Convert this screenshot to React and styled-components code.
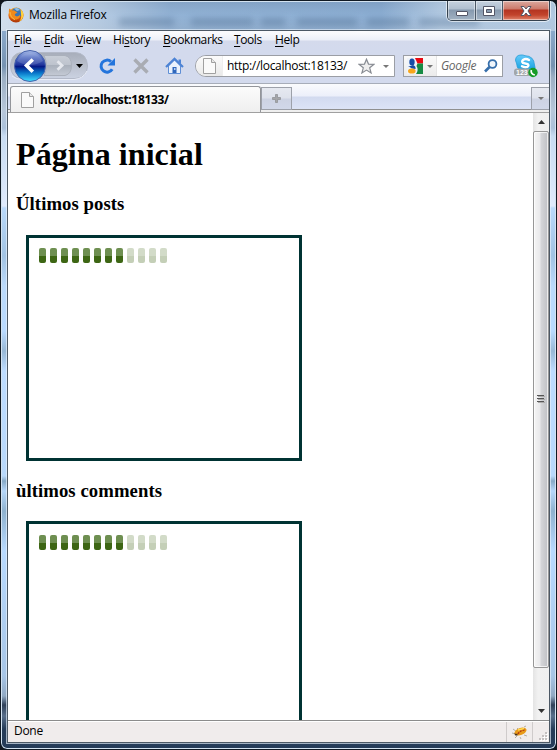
import React from 'react';
import styled, { createGlobalStyle, css } from 'styled-components';

const Global = createGlobalStyle`
  html, body { margin: 0; padding: 0; background: #11161d; overflow: hidden; }
  * { box-sizing: border-box; }
  svg { display: block; flex: none; }
`;

const ui = css`
  font-family: 'Open Sans', 'Noto Sans', sans-serif;
  font-size: 12px;
  line-height: 16px;
  white-space: nowrap;
  color: #000;
`;

const Window = styled.div`
  ${ui}
  width: 557px;
  height: 750px;
  padding: 2px 6px 6px;
  border: 1px solid #101923;
  border-radius: 7px;
  display: flex;
  flex-direction: column;
  overflow: hidden;
  box-shadow: inset 0 0 0 1px #d3e2f0;
  background:
    linear-gradient(90deg, rgba(255,255,255,.6), rgba(255,255,255,.35) 100px, rgba(255,255,255,.05) 170px, transparent 380px, rgba(215,228,240,.5) 440px) 0 0 / 100% 30px no-repeat,
    linear-gradient(180deg, #7f9fc3 0, #8caed3 14px, #8dabcc 28px, #7692b1 65px, #9cafc4 76px, #b7c7da 110px,
      #abc1da 127px, #c8dcf2 135px, #dfeafc 205px, #b9d9fb 207px, #a2c3e3 255px, #bbdafb 285px, #b9daff 330px,
      #98b8d6 350px, #bddcff 370px, #b8d8fb 475px, #88aac7 480px, #b6d7fa 490px, #8fb2cf 510px, #b8daff 550px,
      #a7c5e6 675px, #91a9c3 695px, #304159 704px, #596f8b 715px, #253b58 728px, #263c59 750px);
`;

const TitleBar = styled.div`
  height: 27px;
  flex: none;
  display: flex;
  align-items: flex-start;
  justify-content: space-between;
  position: relative;
`;

const TitleLeft = styled.div`
  display: flex;
  align-items: center;
  gap: 5px;
  padding: 4px 0 0 1px;
`;

const Text = styled.span`
  letter-spacing: ${p => p.$ls || 0}px;
  font-weight: ${p => (p.$bold ? 700 : 400)};
`;

const Ghost = styled.div`
  position: absolute;
  left: ${p => p.$x}px;
  top: 15px;
  width: ${p => p.$w}px;
  height: 8px;
  background: #48678b;
  opacity: .35;
  filter: blur(3px);
`;

const Controls = styled.div`
  display: flex;
  width: 103px;
  height: 20px;
  margin: -2px 0 0;
  border: 1px solid #35424f;
  border-top: 0;
  border-radius: 0 0 5px 5px;
  box-shadow: 0 0 0 1px rgba(255,255,255,.6);
  overflow: hidden;
  position: relative;
`;

const Control = styled.div`
  width: ${p => p.$w}px;
  display: flex;
  align-items: center;
  justify-content: center;
  border-right: 1px solid #4c5967;
  box-shadow: inset 0 0 0 1px rgba(255,255,255,.45);
  background: ${p => p.$close
    ? 'linear-gradient(#dba99f 0, #cc7a6b 8px, #b43421 9px, #c2442c 14px, #e0846c 100%)'
    : 'linear-gradient(#c6d2df 0, #b0bfcf 8px, #8699ae 9px, #a2b3c4 100%)'};
  &:last-child { border: 0; flex: 1; }
`;

const Client = styled.div`
  flex: 1;
  min-height: 0;
  display: flex;
  flex-direction: column;
  border: 1px solid #4c5864;
  box-shadow: 0 0 0 1px rgba(230,241,252,.65);
  background: #fff;
`;

const MenuBar = styled.div`
  height: 18px;
  flex: none;
  display: flex;
  padding: 1px 0 0 6px;
  background: linear-gradient(#fdfdfe, #eceff8 9px, #d4daec 10px, #d3daed);
`;

const MenuItem = styled.div`
  width: ${p => p.$w}px;
  letter-spacing: ${p => p.$ls}px;
  u { text-decoration-thickness: 1px; text-underline-offset: 2px; }
`;

const Toolbar = styled.div`
  height: 35px;
  flex: none;
  display: flex;
  align-items: center;
  background: #d3daed;
  border-bottom: 1px solid #a7adb9;
`;

const NavSlot = styled.div` width: 82px; height: 34px; flex: none; `;
const IconSlot = styled.div`
  width: ${p => p.$w}px;
  flex: none;
  display: flex;
  justify-content: center;
`;

const AddressBar = styled.div`
  width: 200px;
  height: 22px;
  flex: none;
  margin-left: 4px;
  display: flex;
  align-items: center;
  border: 1px solid #9b9ea5;
  border-radius: 11px 0 0 11px;
  background: #fff;
  overflow: hidden;
`;
const SiteIcon = styled.div`
  width: 27px;
  height: 20px;
  display: flex;
  align-items: center;
  justify-content: center;
  padding-left: 1px;
  background: linear-gradient(#fbfbfb, #e9e9e9);
  border-right: 1px solid #eee;
`;
const Address = styled.div`
  flex: 1;
  padding-left: 4px;
  letter-spacing: ${p => p.$ls}px;
`;
const Arrow = styled.i`
  width: 0;
  height: 0;
  border: 3px solid transparent;
  border-top-color: ${p => p.$c || '#777'};
  border-bottom: 0;
  margin: ${p => p.$m || 0};
`;

const SearchBox = styled.div`
  width: 100px;
  height: 22px;
  flex: none;
  margin-left: 8px;
  display: flex;
  align-items: center;
  border: 1px solid #9b9ea5;
  background: #fff;
`;
const Engine = styled.div`
  width: 33px;
  height: 20px;
  padding-left: 3px;
  display: flex;
  align-items: center;
  background: linear-gradient(#fafafa, #ebebeb);
  border-right: 1px solid #e4e4e4;
`;
const Placeholder = styled.div`
  flex: 1;
  padding-left: 4px;
  font-style: italic;
  color: #666;
  letter-spacing: ${p => p.$ls}px;
`;

const TabStrip = styled.div`
  height: 28px;
  flex: none;
  display: flex;
  align-items: flex-start;
  background: linear-gradient(#fafbfd 0, #eceffa 12px, #d2daef 13px, #dce3f6 25px, #8f8f8f 25px, #8f8f8f 26px, #efefef 26px);
`;
const Tab = styled.div`
  width: 251px;
  height: 26px;
  margin: 2px 0 0 2px;
  padding-left: 10px;
  display: flex;
  align-items: center;
  gap: 6px;
  border: 1px solid #93959a;
  border-bottom: 0;
  border-radius: 3px 3px 0 0;
  background: linear-gradient(#fbfbfb, #efefef);
`;
const NewTab = styled.div`
  width: 31px;
  height: 23px;
  margin-top: 3px;
  display: flex;
  align-items: center;
  justify-content: center;
  border: 1px solid #9da1aa;
  background: linear-gradient(#e6e9f1 0, #dee2ec 10px, #cdd3e3 11px, #d1d8e9);
`;
const AllTabs = styled(NewTab)`
  width: 18px;
  margin-left: auto;
  border-right: 0;
`;

const Body = styled.div`
  flex: 1;
  min-height: 0;
  display: flex;
  border-top: 1px solid #a0a0a0;
  border-bottom: 1px solid #8c8c8c;
`;
const Page = styled.main`
  flex: 1;
  padding: 0 8px;
  overflow: hidden;
  background: #fff;
  font-family: 'Liberation Serif', 'Times New Roman', serif;
  white-space: normal;
`;
const H1 = styled.h1`
  margin: 22px 0 0;
  font-size: 32px;
  line-height: 38px;
  letter-spacing: .08px;
`;
const H3 = styled.h3`
  margin: ${p => p.$mt}px 0 0;
  font-size: 18.72px;
  line-height: 22px;
  letter-spacing: .07px;
`;
const Panel = styled.section`
  width: 276px;
  height: 226px;
  margin: ${p => p.$mt}px 0 0 10px;
  padding: ${p => p.$pt}px 0 0 10px;
  border: 3px solid #003333;
`;
const Loader = styled.div` display: flex; gap: 4px; `;
const Pill = styled.i`
  width: 7px;
  height: 15px;
  border-radius: 2px;
  background: ${p => p.$on
    ? 'linear-gradient(#6e8f51 8px, #3d6614 8px)'
    : 'linear-gradient(#d2dbc8 8px, #c4cfb7 8px)'};
`;

const Scrollbar = styled.div`
  width: 16px;
  display: flex;
  flex-direction: column;
  background: linear-gradient(90deg, #e4e4e4, #f1f1f1 5px, #f0f0f0);
`;
const ScrollButton = styled.div`
  height: 18px;
  flex: none;
  margin-top: ${p => (p.$last ? 'auto' : 0)};
  display: flex;
  align-items: center;
  justify-content: center;
`;
const Thumb = styled.div`
  height: 537px;
  flex: none;
  display: flex;
  align-items: center;
  justify-content: center;
  border: 1px solid #979797;
  border-radius: 2px;
  box-shadow: inset 0 0 0 1px rgba(255,255,255,.7);
  background: linear-gradient(90deg, #f5f5f5, #e9e9eb 6px, #d5d6d9 7px, #bfc0c4);
`;
const Status = styled.div`
  height: 21px;
  flex: none;
  display: flex;
  align-items: center;
  border-top: 1px solid #fff;
  background: #f0ecec;
`;
const StatusText = styled.div`
  flex: 1;
  padding: 0 0 2px 6px;
  letter-spacing: ${p => p.$ls}px;
`;
const StatusCell = styled.div`
  width: ${p => p.$w}px;
  height: 20px;
  display: flex;
  align-items: ${p => (p.$end ? 'flex-end' : 'center')};
  justify-content: ${p => (p.$end ? 'flex-end' : 'center')};
  border-left: 1px solid #cfcbcb;
`;

const FirefoxIcon = () => (
  <svg width="16" height="16" viewBox="0 0 16 16">
    <defs>
      <linearGradient id="fox" x2="0" y2="1"><stop stopColor="#f6a623" /><stop offset=".5" stopColor="#ea6b12" /><stop offset="1" stopColor="#a93408" /></linearGradient>
    </defs>
    <circle cx="8" cy="8" r="7.6" fill="url(#fox)" />
    <circle cx="8.5" cy="6" r="5.2" fill="#3c76b5" />
    <path d="M6 1.5Q10 0 12 3L9 4Z" fill="#8fc0e4" />
    <path d="M1.2 1.5L4 3.5Q6 3 7.4 4.2L9.5 5.5 7 7Q6 9 9 9.4 11.5 9.4 12 7.6 12.7 11.5 8.6 12.5 3 13 1 8Q.5 4 1.2 1.5Z" fill="#f08a1c" />
    <path d="M12.5 2.3Q15.8 5 15.3 9 14.5 13 11 14.8 14 11 13 7Z" fill="#ffd33b" />
    <path d="M2 5Q2.4 10.6 7 12.8" fill="none" stroke="#ffc751" strokeWidth=".8" />
  </svg>
);

const NavButtons = () => (
  <svg width="81" height="34" viewBox="0 0 81 34">
    <defs>
      <linearGradient id="back" x2="0" y2="1"><stop stopColor="#a9bce8" /><stop offset=".22" stopColor="#5570c4" /><stop offset=".48" stopColor="#1b2f99" /><stop offset=".5" stopColor="#041280" /><stop offset=".72" stopColor="#0873c8" /><stop offset="1" stopColor="#45e2ff" /></linearGradient>
      <linearGradient id="cap" x2="0" y2="1"><stop stopColor="#a7adba" /><stop offset=".5" stopColor="#bac0cd" /><stop offset="1" stopColor="#cbd2e2" /></linearGradient>
      <linearGradient id="fwd" x2="0" y2="1"><stop stopColor="#c9ced7" /><stop offset=".48" stopColor="#bdc3cd" /><stop offset=".5" stopColor="#aab1bc" /><stop offset="1" stopColor="#c4cad5" /></linearGradient>
    </defs>
    <path d="M14 3.5H67Q79 4 79.500 17 79 29 67 29.500H14Q3 29 2.500 17 3 4 14 3.500Z" fill="url(#cap)" stroke="#b3b9c8" />
    <path d="M4 27Q8 30.500 15 30.500H66Q75 30 79 22" fill="none" stroke="#e9edf7" />
    <path d="M36 6.500H57Q63.500 8 63.500 16.500 63.500 25 57 26.500H36Q41 17 36 6.500Z" fill="url(#fwd)" stroke="#aab0bb" />
    <path d="M49.500 12.300L54 16.500 49.500 20.800" fill="none" stroke="#e5e8ee" strokeWidth="2.800" />
    <circle cx="22" cy="17" r="15.500" fill="url(#back)" stroke="#4762aa" />
    <path d="M9 12Q13 4 22 4T35 12Q29 16 22 16T9 12Z" fill="#fff" opacity=".14" />
    <path d="M24.800 10.500L18.500 16.500 24.800 22.800" fill="none" stroke="#fff" strokeWidth="3.600" />
    <path d="M68 15H75L71.500 19Z" fill="#000" />
  </svg>
);

const Reload = () => (
  <svg width="18" height="18" viewBox="0 0 18 18">
    <path d="M14.200 12.200A6 6 0 1 1 13 4.600" fill="none" stroke="#2475dc" strokeWidth="3" />
    <path d="M17 1V8.500H9.500Z" fill="#2475dc" />
  </svg>
);
const Stop = () => (
  <svg width="18" height="18" viewBox="0 0 18 18"><path d="M2.500 2.500L15.500 15.500M15.500 2.500L2.500 15.500" stroke="#a9acb3" strokeWidth="3.400" /></svg>
);
const Home = () => (
  <svg width="19" height="18" viewBox="0 0 19 18">
    <path d="M3.500 9V16.500H15.500V9L9.500 3Z" fill="#eaf2fd" stroke="#5f8ed5" />
    <path d="M1 10L9.500 1.800 18 10" fill="none" stroke="#4c83d5" strokeWidth="2.200" />
    <path d="M13.500 2.500H16V7L13.500 5Z" fill="#4c83d5" />
    <path d="M7.500 10H11.500V16H7.500Z" fill="#2f67bd" /><path d="M9 11H10.500V13H9Z" fill="#b8d2f5" />
  </svg>
);
const Doc = () => (
  <svg width="13" height="16" viewBox="0 0 13 16">
    <path d="M.5.5H8.500L12.500 4.500V15.500H.5Z" fill="#fafafa" stroke="#a0a0a0" />
    <path d="M8.500.5V4.500H12.500" fill="#e8e8e8" stroke="#a0a0a0" />
  </svg>
);
const Star = () => (
  <svg width="17" height="17" viewBox="0 0 17 17">
    <path d="M8.500 1.200L10.500 6.100 15.800 6.400 11.700 9.800 13.100 15 8.500 12.100 3.900 15 5.300 9.800 1.200 6.400 6.500 6.100Z" fill="#eee" stroke="#888c93" strokeWidth="1.200" />
  </svg>
);
const GoogleIcon = () => (
  <svg width="16" height="16" viewBox="0 0 16 16">
    <path d="M0 0H16V16H0Z" fill="#eef3fa" />
    <path d="M8 0H16V5.500H10.500Z" fill="#e70913" />
    <path d="M10.500 5.500H16V16H9Q12 12 9.500 8Z" fill="#168b43" />
    <ellipse cx="5" cy="3.900" rx="2.700" ry="3.500" fill="#174ca5" />
    <path d="M1 8Q4 8.500 6 7 9 8 8.500 11L5 10.500Z" fill="#174ca5" />
    <ellipse cx="4.800" cy="13" rx="3.800" ry="2.600" fill="#f8a61b" />
  </svg>
);
const Lens = () => (
  <svg width="14" height="14" viewBox="0 0 14 14">
    <circle cx="8.500" cy="5" r="3.900" fill="#eff5fb" stroke="#376fab" strokeWidth="1.800" />
    <path d="M5.500 8L1 12.500" stroke="#376fab" strokeWidth="2.600" />
  </svg>
);
const Skype = () => (
  <svg width="24" height="24" viewBox="0 0 24 24">
    <defs><linearGradient id="sky" x2="0" y2="1"><stop stopColor="#65cafa" /><stop offset="1" stopColor="#0799dc" /></linearGradient></defs>
    <path d="M7 1Q2 1 1.500 6 1.800 8 2.500 9 3 18 12 18.500 17 20 20 17 22 14 20.500 11 20 2 11 1.700 9 .8 7 1Z" fill="url(#sky)" stroke="#269cd5" strokeWidth=".8" />
    <path d="M15 6Q12 4.300 9.300 5.700 7.200 7.400 9 9L13.500 10Q15.500 11.600 13.300 12.900 10.500 13.700 8 12.200" fill="none" stroke="#fff" strokeWidth="2.400" strokeLinecap="round" />
    <rect x="0" y="14.500" width="17" height="7.500" rx="3" fill="#a2a6a9" />
    <text x="2" y="20.800" fontFamily="Liberation Sans, sans-serif" fontSize="7" fontWeight="700" fill="#fff">123</text>
    <circle cx="19" cy="18.500" r="4.700" fill="#169c27" />
    <path d="M17.300 16Q16.500 20 20.800 21" fill="none" stroke="#fff" strokeWidth="1.700" />
  </svg>
);
const Plus = () => (
  <svg width="9" height="9" viewBox="0 0 9 9"><path d="M3.500.5H5.500V3.500H8.500V5.500H5.500V8.500H3.500V5.500H.5V3.500H3.500Z" fill="#a5a6a9" stroke="#919397" strokeWidth=".8" /></svg>
);
const Bug = () => (
  <svg width="17" height="15" viewBox="0 0 17 15">
    <path d="M2 4L6 7M1 8L5 9M4 13L7 10M9 12L10 14M13 10L16 11M6 3L8 5M13 2L15 1" stroke="#a39e90" strokeWidth=".8" />
    <ellipse cx="9.500" cy="6.500" rx="6.300" ry="3.500" transform="rotate(-20 9.500 6.500)" fill="#e89b19" />
    <path d="M7 9Q9 5 14 5" stroke="#b33a12" strokeWidth="1.600" fill="none" strokeDasharray="2 1" />
    <path d="M3 8.500L7 9 5 11Z" fill="#47331e" /><path d="M7 5L13 3.500" stroke="#ffdc54" strokeWidth="1.300" />
  </svg>
);
const Grip = () => (
  <svg width="12" height="12" viewBox="0 0 12 12">
    {[[8, 0], [5, 3], [8, 3], [2, 6], [5, 6], [8, 6]].map(([x, y]) => (
      <g key={x + '-' + y}><rect x={x + 1} y={y + 3} width="2" height="2" fill="#fff" /><rect x={x} y={y + 2} width="2" height="2" fill="#c4c0c0" /></g>
    ))}
  </svg>
);
const ThumbGrip = () => (
  <svg width="8" height="9" viewBox="0 0 8 9">
    {[0, 3, 6].map(y => <g key={y}><path d={`M0 ${y + .5}H7`} stroke="#555" /><path d={`M1 ${y + 1.5}H8`} stroke="#aaa" /></g>)}
  </svg>
);
const WindowGlyph = ({ kind }) => (
  <svg width="14" height="12" viewBox="0 0 14 12">
    {kind === 'min' && <rect x="1.500" y="6.500" width="11" height="4" rx=".5" fill="#fff" stroke="#535666" />}
    {kind === 'max' && <path d="M1.500 1.500H12.500V10.500H1.500ZM4.500 4.500V7.500H9.500V4.500Z" fill="#fff" fillRule="evenodd" stroke="#535666" />}
    {kind === 'close' && <path d="M2 1.500H5L7 4 9 1.500H12L9 6 12 10.500H9L7 8 5 10.500H2L5 6Z" fill="#fff" stroke="#535666" />}
  </svg>
);

const MENU = [['F', 'ile', '', 30], ['E', 'dit', '', 32], ['V', 'iew', '', 37], ['s', 'tory', 'Hi', 50], ['B', 'ookmarks', '', 71], ['T', 'ools', '', 41], ['H', 'elp', '', 30]];

const Progress = () => (
  <Loader>{Array.from({ length: 12 }, (_, i) => <Pill key={i} $on={i < 8} />)}</Loader>
);

export default function App() {
  return (
    <>
      <Global />
      <Window>
        <TitleBar>
          <Ghost $x={112} $w={55} /><Ghost $x={184} $w={62} /><Ghost $x={254} $w={24} /><Ghost $x={290} $w={60} /><Ghost $x={360} $w={42} /><Ghost $x={412} $w={60} />
          <TitleLeft><FirefoxIcon /><Text $ls={-0.22}>Mozilla Firefox</Text></TitleLeft>
          <Controls>
            <Control $w={28}><WindowGlyph kind="min" /></Control>
            <Control $w={27}><WindowGlyph kind="max" /></Control>
            <Control $close><WindowGlyph kind="close" /></Control>
          </Controls>
        </TitleBar>
        <Client>
          <MenuBar>
            {MENU.map(([key, rest, lead, w]) => <MenuItem key={rest} $w={w} $ls={-0.4}>{lead}<u>{key}</u>{rest}</MenuItem>)}
          </MenuBar>
          <Toolbar>
            <NavSlot><NavButtons /></NavSlot>
            <IconSlot $w={34}><Reload /></IconSlot>
            <IconSlot $w={34}><Stop /></IconSlot>
            <IconSlot $w={33}><Home /></IconSlot>
            <AddressBar>
              <SiteIcon><Doc /></SiteIcon>
              <Address $ls={-0.31}>http://localhost:18133/</Address>
              <Star /><Arrow $m="0 5px 0 8px" />
            </AddressBar>
            <SearchBox>
              <Engine><GoogleIcon /><Arrow $m="0 0 0 4px" /></Engine>
              <Placeholder $ls={-0.3}>Google</Placeholder>
              <IconSlot $w={22}><Lens /></IconSlot>
            </SearchBox>
            <IconSlot $w={46}><Skype /></IconSlot>
          </Toolbar>
          <TabStrip>
            <Tab><Doc /><Text $bold $ls={-0.35}>http://localhost:18133/</Text></Tab>
            <NewTab><Plus /></NewTab>
            <AllTabs><Arrow /></AllTabs>
          </TabStrip>
          <Body>
            <Page>
              <H1>Página inicial</H1>
              <H3 $mt={20}>Últimos posts</H3>
              <Panel $mt={20} $pt={10}><Progress /></Panel>
              <H3 $mt={19}>ùltimos comments</H3>
              <Panel $mt={19} $pt={11}><Progress /></Panel>
            </Page>
            <Scrollbar>
              <ScrollButton><svg width="7" height="4"><path d="M0 4L3.500 0 7 4Z" fill="#333" /></svg></ScrollButton>
              <Thumb><ThumbGrip /></Thumb>
              <ScrollButton $last><svg width="7" height="4"><path d="M0 0L3.500 4 7 0Z" fill="#333" /></svg></ScrollButton>
            </Scrollbar>
          </Body>
          <Status>
            <StatusText $ls={-0.3}>Done</StatusText>
            <StatusCell $w={26}><Bug /></StatusCell>
            <StatusCell $w={17} $end><Grip /></StatusCell>
          </Status>
        </Client>
      </Window>
    </>
  );
}
